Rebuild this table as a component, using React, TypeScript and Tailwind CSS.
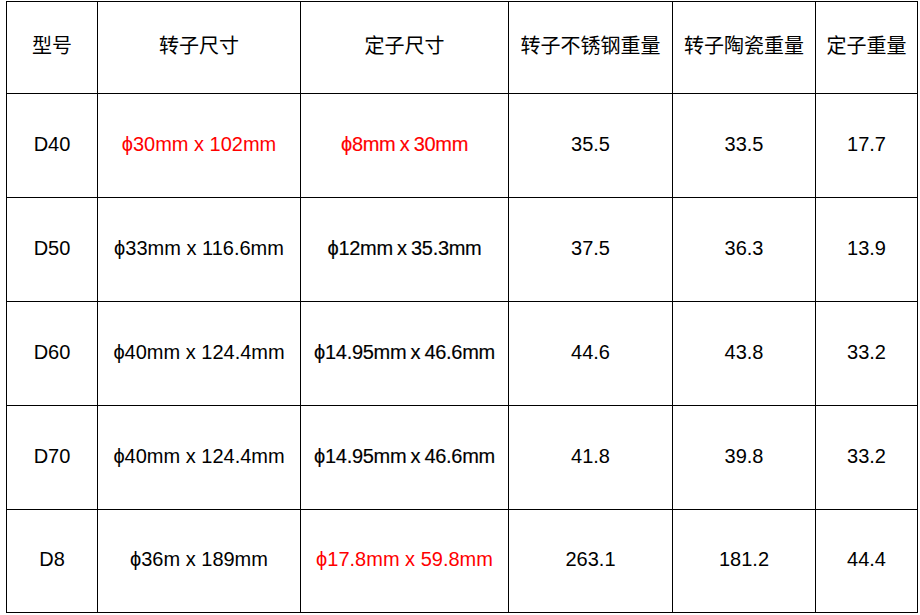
import React from 'react';

type Cell = { text: string; red?: boolean; heavy?: boolean };

const headers = ['型号', '转子尺寸', '定子尺寸', '转子不锈钢重量', '转子陶瓷重量', '定子重量'];

const rows: Cell[][] = [
  [
    { text: 'D40' },
    { text: 'ϕ30mm x 102mm', red: true },
    { text: 'ϕ8mm x 30mm', red: true, heavy: true },
    { text: '35.5' },
    { text: '33.5' },
    { text: '17.7' },
  ],
  [
    { text: 'D50' },
    { text: 'ϕ33mm x 116.6mm' },
    { text: 'ϕ12mm x 35.3mm', heavy: true },
    { text: '37.5' },
    { text: '36.3' },
    { text: '13.9' },
  ],
  [
    { text: 'D60' },
    { text: 'ϕ40mm x 124.4mm' },
    { text: 'ϕ14.95mm x 46.6mm', heavy: true },
    { text: '44.6' },
    { text: '43.8' },
    { text: '33.2' },
  ],
  [
    { text: 'D70' },
    { text: 'ϕ40mm x 124.4mm' },
    { text: 'ϕ14.95mm x 46.6mm', heavy: true },
    { text: '41.8' },
    { text: '39.8' },
    { text: '33.2' },
  ],
  [
    { text: 'D8' },
    { text: 'ϕ36m x 189mm' },
    { text: 'ϕ17.8mm x 59.8mm', red: true },
    { text: '263.1' },
    { text: '181.2' },
    { text: '44.4' },
  ],
];

export default function App() {
  return (
    <div className="w-[920px] h-[615px] bg-white pl-[6px] pt-[1px] font-['Liberation_Sans','Noto_Sans_CJK_SC',sans-serif] text-[20px] text-black">
      <div className="grid w-[912px] grid-cols-[90px_202px_207px_163px_142px_101px] grid-rows-[91px_103px_103px_103px_103px_102px] gap-px bg-black p-px">
        {headers.map((h) => (
          <div key={h} className="flex items-center justify-center bg-white pb-[5px] font-['Noto_Sans_CJK_SC',sans-serif] text-[20px] leading-none">
            {h}
          </div>
        ))}
        {rows.map((row, ri) =>
          row.map((c, ci) => (
            <div
              key={`${ri}-${ci}`}
              className={
                'flex items-center justify-center bg-white pb-[4px] leading-none ' +
                (c.red ? 'text-[#ff0000] ' : '') +
                (c.heavy ? 'tracking-[-0.3px] [-webkit-text-stroke:0.15px] [word-spacing:-1px]' : '')
              }
            >
              {c.text}
            </div>
          ))
        )}
      </div>
    </div>
  );
}
